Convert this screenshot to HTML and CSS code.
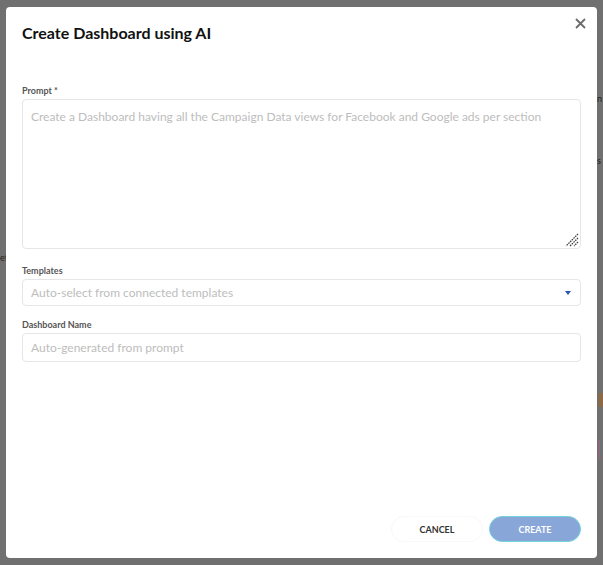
FILE: index.html
```html
<!DOCTYPE html>
<html lang="en">
<head>
    <meta charset="UTF-8">
    <meta name="viewport" content="width=device-width, initial-scale=1.0">
    <title>Create Dashboard using AI</title>
    <link rel="stylesheet" href="styles.css">
</head>
<body>
    <!-- page behind the overlay, only a few bits peek out -->
    <div class="backdrop">
        <span class="bg-text bg-ef">ef</span>
        <span class="bg-text bg-n">n</span>
        <span class="bg-text bg-s">s</span>
        <span class="bg-orange"></span>
        <span class="bg-pink"></span>
    </div>

    <div class="modal">
        <div class="modal-head">
            <h1>Create Dashboard using AI</h1>
            <button class="close-btn" aria-label="Close">
                <svg width="11" height="11" viewBox="0 0 11 11">
                    <path d="M1 1 L10 10 M10 1 L1 10" stroke="#6b6b6b" stroke-width="1.8" fill="none"/>
                </svg>
            </button>
        </div>

        <div class="field">
            <label>Prompt *</label>
            <div class="textarea">
                <span class="placeholder">Create a Dashboard having all the Campaign Data views for Facebook and Google ads per section</span>
                <svg class="grip" width="14" height="14" viewBox="0 0 14 14">
                    <path d="M13 1 L1 13 M13 5 L5 13 M13 9 L9 13" stroke="#444" stroke-width="1.3" stroke-dasharray="1.6 0.8" fill="none"/>
                </svg>
            </div>
        </div>

        <div class="field field-select">
            <label>Templates</label>
            <div class="select">
                <span class="placeholder">Auto-select from connected templates</span>
                <span class="caret"></span>
            </div>
        </div>

        <div class="field">
            <label>Dashboard Name</label>
            <div class="input">
                <span class="placeholder">Auto-generated from prompt</span>
            </div>
        </div>

        <div class="modal-foot">
            <button class="btn btn-cancel">CANCEL</button>
            <button class="btn btn-create">CREATE</button>
        </div>
    </div>
</body>
</html>
```

FILE: styles.css
```css
body {
    font-family: 'Lato', 'Noto Sans', sans-serif;
    background-color: #707070;
    margin: 0;
    padding: 7px 6px 7px 6px;
    height: 565px;
    box-sizing: border-box;
    overflow: hidden;
    position: relative;
}

.backdrop {
    position: absolute;
    inset: 0;
}

.bg-text {
    position: absolute;
    font-size: 9px;
    color: #222;
}

.bg-ef { left: 0; top: 252px; }
.bg-n { left: 597px; top: 93px; }
.bg-s { left: 597px; top: 155px; }

.bg-orange {
    position: absolute;
    left: 598px;
    top: 393px;
    width: 5px;
    height: 14px;
    background-color: #8a6a4c;
}

.bg-pink {
    position: absolute;
    left: 599px;
    top: 440px;
    width: 1px;
    height: 20px;
    background-color: #a06080;
}

.modal {
    position: relative;
    background-color: #fff;
    border-radius: 4px;
    height: 551px;
    padding: 0 16px 0 16px;
    box-sizing: border-box;
    display: flex;
    flex-direction: column;
}

.modal-head {
    display: flex;
    justify-content: space-between;
    align-items: flex-start;
    height: 78px;
}

.modal-head h1 {
    margin: 16px 0 0 0;
    font-size: 16px;
    font-weight: 700;
    color: #111;
}

.close-btn {
    background: none;
    border: none;
    padding: 0;
    margin: 10px -5px 0 0;
    cursor: pointer;
}

.field {
    display: flex;
    flex-direction: column;
    margin-bottom: 16px;
}

.field-select {
    margin-bottom: 13px;
}

.field label {
    font-size: 9px;
    font-weight: 700;
    color: #555;
    margin-bottom: 3px;
}

.placeholder {
    font-size: 12px;
    color: #bdbdbd;
}

.textarea,
.select,
.input {
    border: 1px solid #e6e6e6;
    border-radius: 4px;
    padding: 0 8px;
    position: relative;
}

.textarea {
    height: 150px;
    padding-top: 5px;
    box-sizing: border-box;
}

.grip {
    position: absolute;
    right: 1px;
    bottom: 1px;
}

.select {
    height: 25px;
    display: flex;
    align-items: center;
    justify-content: space-between;
}

.caret {
    width: 0;
    height: 0;
    border-left: 3.5px solid transparent;
    border-right: 3.5px solid transparent;
    border-top: 4px solid #2a55b8;
    margin-right: 1px;
}

.input {
    height: 27px;
    display: flex;
    align-items: center;
}

.modal-foot {
    margin-top: auto;
    margin-bottom: 16px;
    display: flex;
    justify-content: flex-end;
    gap: 6px;
}

.btn {
    width: 92px;
    height: 26px;
    border-radius: 13px;
    font-family: inherit;
    font-size: 9px;
    font-weight: 700;
    cursor: pointer;
}

.btn-cancel {
    background-color: #fff;
    border: 1px solid #f8f8f8;
    color: #333;
}

.btn-create {
    background-color: #88a6d8;
    border: 1px solid #74d3de;
    color: #fff;
}
```
